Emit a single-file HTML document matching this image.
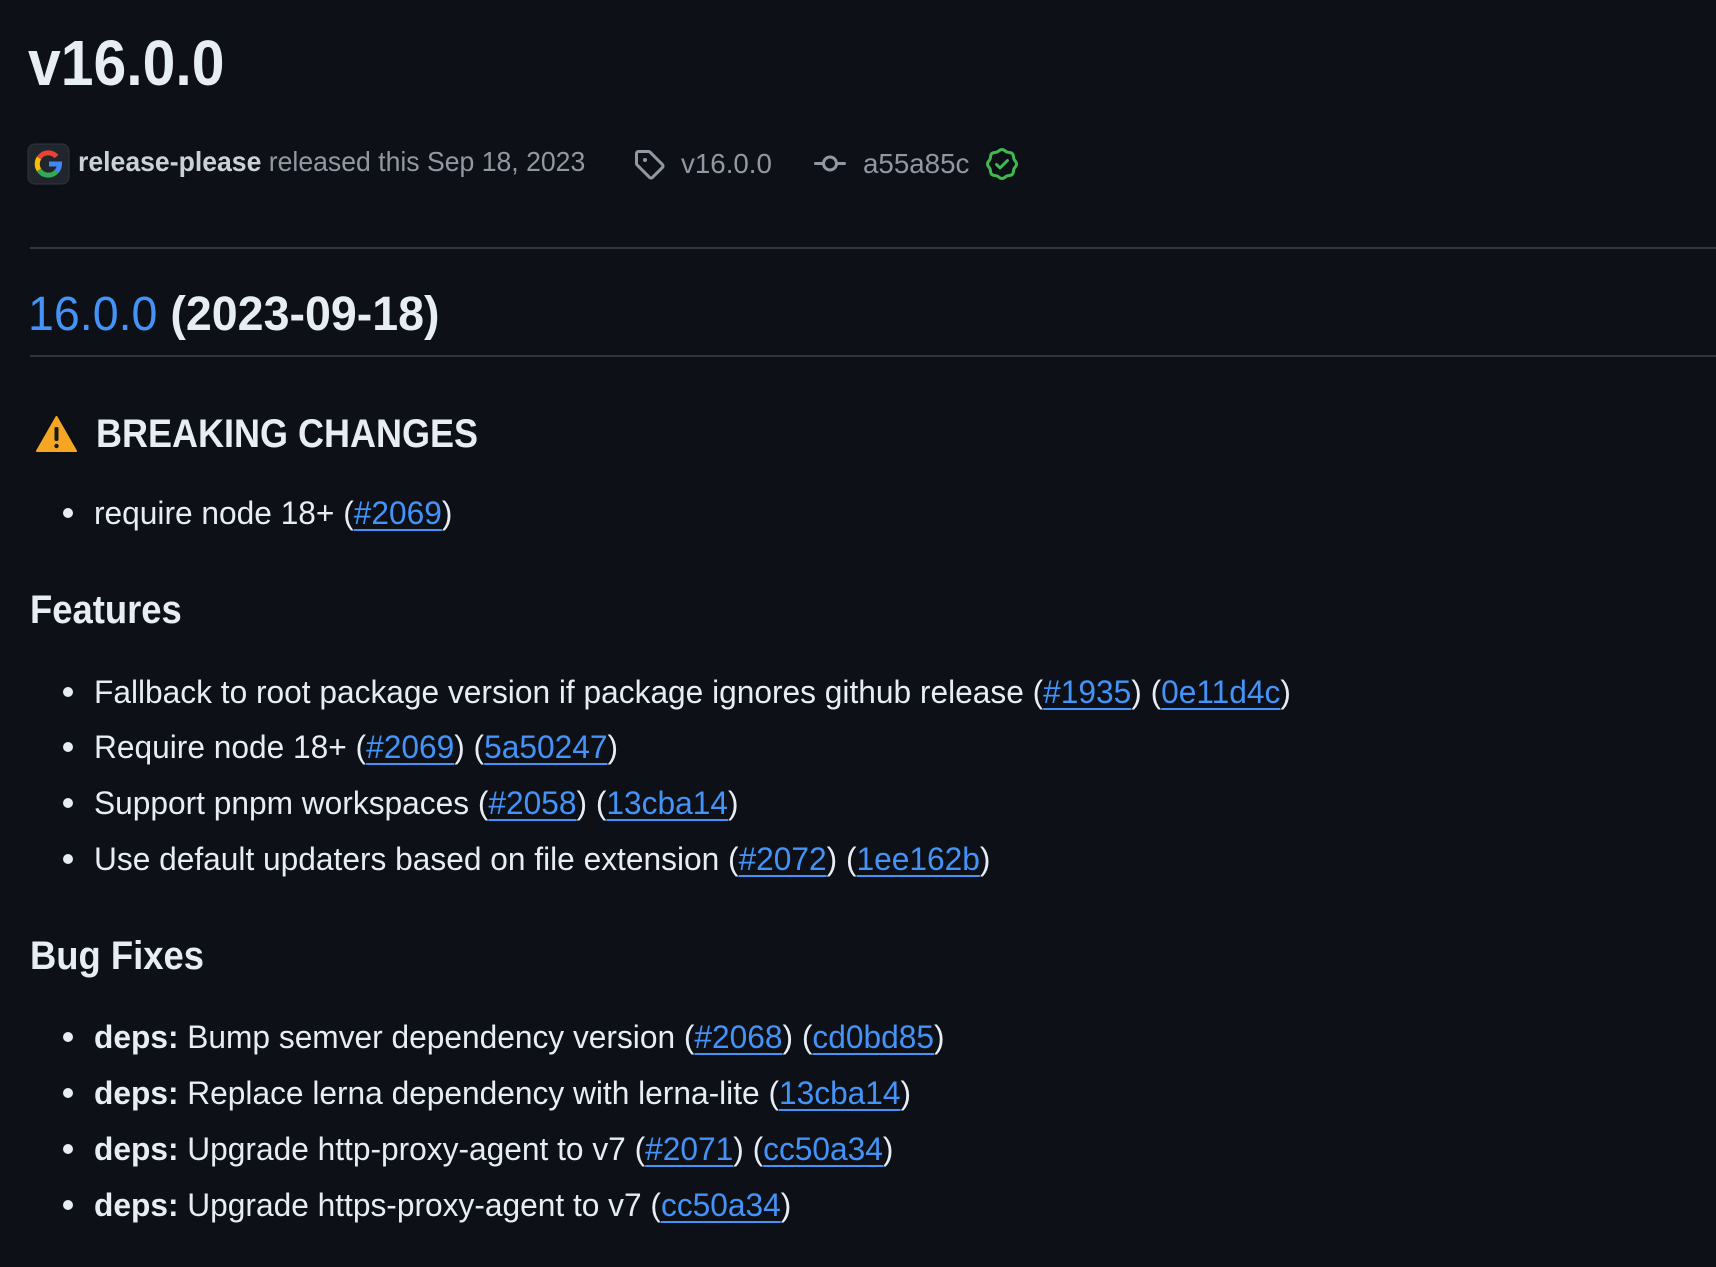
<!DOCTYPE html>
<html><head><meta charset="utf-8"><style>
html,body{margin:0;padding:0}
body{width:1716px;height:1267px;background:#0d1117;position:relative;overflow:hidden;font-family:"Liberation Sans",sans-serif;color:#e6edf3}
.l{position:absolute;line-height:1;white-space:nowrap;transform:scaleX(0.99);transform-origin:0 0}
a{color:#4493f8;text-decoration:underline;text-decoration-thickness:2px;text-underline-offset:5px}
.b{position:absolute;width:10px;height:10px;border-radius:50%;background:#e6edf3;left:63px}
.hr{position:absolute;left:30px;right:0;height:2px;background:#30363d}
.m{color:#9198a1}
</style></head><body>
<div class="l" style="left:28px;top:31px;font-size:64px;font-weight:bold;transform:scaleX(0.92)">v16.0.0</div>

<svg style="position:absolute;left:27px;top:143px" width="43" height="42" viewBox="0 0 43 42">
<rect x="1" y="1" width="41" height="40" rx="7" fill="#21262d" stroke="#30363d"/>
<path d="M29.5 13.5A11 11 0 0 0 12 15" fill="none" stroke="#ea4335" stroke-width="5"/>
<path d="M12 15a11 11 0 0 0 0 12" fill="none" stroke="#fbbc05" stroke-width="5"/>
<path d="M12 27a11 11 0 0 0 17.5 1.5" fill="none" stroke="#34a853" stroke-width="5"/>
<path d="M29.5 28.5A11 11 0 0 0 32.5 21H22" fill="none" stroke="#4285f4" stroke-width="5"/>
</svg>
<div class="l m" style="left:78px;top:148px;font-size:28px;transform:scaleX(0.95)"><b style="color:#c9d1d9">release-please</b> released this Sep 18, 2023</div>
<svg style="position:absolute;left:633px;top:148px" width="32" height="32" viewBox="0 0 16 16"><path fill="#9198a1" d="M1 7.775V2.75C1 1.784 1.784 1 2.75 1h5.025c.464 0 .91.184 1.238.513l6.25 6.25a1.750 1.750 0 0 1 0 2.474l-5.026 5.026a1.75 1.75 0 0 1-2.474 0l-6.250-6.250A1.752 1.752 0 0 1 1 7.775Zm1.5 0c0 .066.026.13.073.177l6.25 6.25a.25.25 0 0 0 .354 0l5.025-5.025a.25.25 0 0 0 0-.354l-6.25-6.25a.25.25 0 0 0-.177-.073H2.75a.25.25 0 0 0-.25.25ZM6 5a1 1 0 1 1 0 2 1 1 0 0 1 0-2Z"/></svg>
<div class="l m" style="left:681px;top:150px;font-size:28px">v16.0.0</div>
<svg style="position:absolute;left:814px;top:148px" width="32" height="32" viewBox="0 0 16 16"><path fill="#9198a1" d="M11.93 8.5a4.002 4.002 0 0 1-7.86 0H.75a.75.75 0 0 1 0-1.5h3.32a4.002 4.002 0 0 1 7.86 0h3.32a.75.75 0 0 1 0 1.5Zm-1.43-.75a2.5 2.5 0 1 0-5 0 2.5 2.5 0 0 0 5 0Z"/></svg>
<div class="l m" style="left:863px;top:150px;font-size:28px">a55a85c</div>
<svg style="position:absolute;left:986px;top:148px" width="32" height="32" viewBox="0 0 16 16"><path fill="#3fb950" d="m9.585.52.929.68c.153.112.331.186.518.215l1.138.175a2.678 2.678 0 0 1 2.24 2.24l.174 1.139c.029.187.103.365.215.518l.68.928a2.677 2.677 0 0 1 0 3.17l-.68.928a1.174 1.174 0 0 0-.215.518l-.175 1.138a2.678 2.678 0 0 1-2.241 2.241l-1.138.175a1.17 1.17 0 0 0-.518.215l-.928.68a2.677 2.677 0 0 1-3.17 0l-.928-.68a1.174 1.174 0 0 0-.518-.215L3.83 14.41a2.678 2.678 0 0 1-2.24-2.24l-.175-1.138a1.17 1.17 0 0 0-.215-.518l-.68-.928a2.677 2.677 0 0 1 0-3.17l.68-.928c.112-.153.186-.331.215-.518l.175-1.14a2.678 2.678 0 0 1 2.24-2.24l1.139-.175c.187-.029.365-.103.518-.215l.928-.68a2.677 2.677 0 0 1 3.17 0ZM7.303 1.728l-.927.68a2.67 2.67 0 0 1-1.18.489l-1.137.174a1.179 1.179 0 0 0-.987.987l-.174 1.136a2.677 2.677 0 0 1-.489 1.18l-.68.928a1.18 1.18 0 0 0 0 1.394l.68.927c.256.348.424.753.489 1.18l.174 1.137c.078.509.478.909.987.987l1.136.174a2.67 2.67 0 0 1 1.18.489l.928.68c.414.305.979.305 1.394 0l.927-.68a2.67 2.67 0 0 1 1.18-.489l1.137-.174a1.18 1.18 0 0 0 .987-.987l.174-1.136a2.67 2.67 0 0 1 .489-1.180l.68-.928a1.176 1.176 0 0 0 0-1.394l-.68-.927a2.686 2.686 0 0 1-.489-1.18l-.174-1.137a1.179 1.179 0 0 0-.987-.987l-1.136-.174a2.677 2.677 0 0 1-1.18-.489l-.928-.68a1.176 1.176 0 0 0-1.394 0ZM11.28 6.78l-3.75 3.75a.75.75 0 0 1-1.06 0L4.72 8.78a.751.751 0 0 1 .018-1.042.751.751 0 0 1 1.042-.018l1.22 1.22 3.22-3.22a.751.751 0 0 1 1.042.018.751.751 0 0 1 .018 1.042Z"/></svg>

<div class="hr" style="top:247px"></div>
<div class="l" style="left:28px;top:291px;font-size:48px;font-weight:bold;transform:scaleX(0.97)"><span style="color:#4493f8;font-weight:normal">16.0.0</span> (2023-09-18)</div>
<div class="hr" style="top:355px"></div>

<svg style="position:absolute;left:36px;top:416px" width="41" height="36" viewBox="0 0 41 36"><path d="M20.5 1 L40 35 H1 Z" fill="#f5a623" stroke="#f5a623" stroke-width="2" stroke-linejoin="round"/><rect x="18.5" y="11" width="4" height="14" rx="1.5" fill="#1a1a1a"/><circle cx="20.5" cy="30" r="2.2" fill="#1a1a1a"/></svg>
<div class="l" style="left:96px;top:414px;font-size:40px;font-weight:bold;transform:scaleX(0.90)">BREAKING CHANGES</div>
<div class="b" style="top:508px"></div>
<div class="l" style="left:94px;top:497px;font-size:32px">require node 18+ (<a>#2069</a>)</div>

<div class="l" style="left:30px;top:590px;font-size:40px;font-weight:bold;transform:scaleX(0.91)">Features</div>
<div class="b" style="top:687px"></div>
<div class="l" style="left:94px;top:676px;font-size:32px">Fallback to root package version if package ignores github release (<a>#1935</a>) (<a>0e11d4c</a>)</div>
<div class="b" style="top:742px"></div>
<div class="l" style="left:94px;top:731px;font-size:32px">Require node 18+ (<a>#2069</a>) (<a>5a50247</a>)</div>
<div class="b" style="top:798px"></div>
<div class="l" style="left:94px;top:787px;font-size:32px">Support pnpm workspaces (<a>#2058</a>) (<a>13cba14</a>)</div>
<div class="b" style="top:854px"></div>
<div class="l" style="left:94px;top:843px;font-size:32px">Use default updaters based on file extension (<a>#2072</a>) (<a>1ee162b</a>)</div>

<div class="l" style="left:30px;top:936px;font-size:40px;font-weight:bold;transform:scaleX(0.91)">Bug Fixes</div>
<div class="b" style="top:1032px"></div>
<div class="l" style="left:94px;top:1021px;font-size:32px"><b>deps:</b> Bump semver dependency version (<a>#2068</a>) (<a>cd0bd85</a>)</div>
<div class="b" style="top:1088px"></div>
<div class="l" style="left:94px;top:1077px;font-size:32px"><b>deps:</b> Replace lerna dependency with lerna-lite (<a>13cba14</a>)</div>
<div class="b" style="top:1144px"></div>
<div class="l" style="left:94px;top:1133px;font-size:32px"><b>deps:</b> Upgrade http-proxy-agent to v7 (<a>#2071</a>) (<a>cc50a34</a>)</div>
<div class="b" style="top:1200px"></div>
<div class="l" style="left:94px;top:1189px;font-size:32px"><b>deps:</b> Upgrade https-proxy-agent to v7 (<a>cc50a34</a>)</div>
</body></html>
